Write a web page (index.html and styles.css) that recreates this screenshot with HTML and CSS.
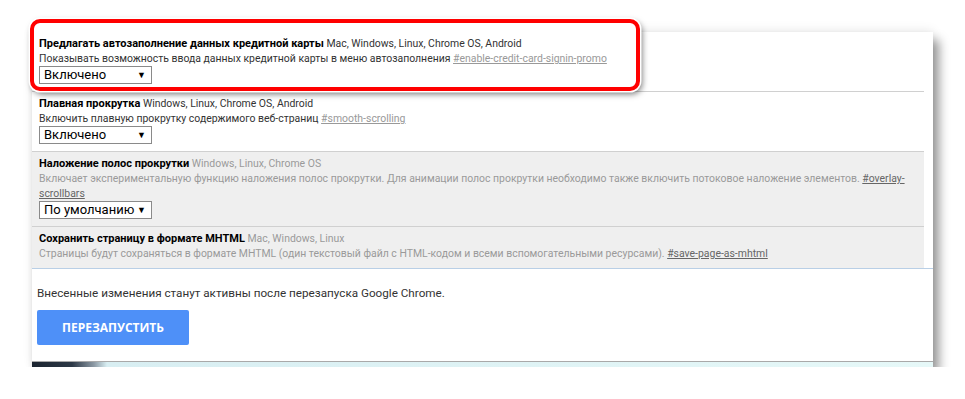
FILE: index.html
```html
<!DOCTYPE html>
<html lang="ru">
<head>
<meta charset="utf-8">
<title>Flags</title>
<link rel="stylesheet" href="styles.css">
</head>
<body>
<div class="stage">
  <div class="panel">
    <div class="list">
      <div class="row hl">
        <div class="title"><b>Предлагать автозаполнение данных кредитной карты</b> <span class="plat">Mac, Windows, Linux, Chrome OS, Android</span></div>
        <div class="desc">Показывать возможность ввода данных кредитной карты в меню автозаполнения <a class="ref">#enable-credit-card-signin-promo</a></div>
        <div class="sel"><span>Включено</span><span class="arr">▼</span></div>
      </div>
      <div class="row">
        <div class="title"><b>Плавная прокрутка</b> <span class="plat">Windows, Linux, Chrome OS, Android</span></div>
        <div class="desc">Включить плавную прокрутку содержимого веб-страниц <a class="ref">#smooth-scrolling</a></div>
        <div class="sel"><span>Включено</span><span class="arr">▼</span></div>
      </div>
      <div class="row off">
        <div class="title"><b>Наложение полос прокрутки</b> <span class="plat">Windows, Linux, Chrome OS</span></div>
        <div class="desc">Включает экспериментальную функцию наложения полос прокрутки. Для анимации полос прокрутки необходимо также включить потоковое наложение элементов. <a class="ref">#overlay-<br>scrollbars</a></div>
        <div class="sel"><span>По умолчанию</span><span class="arr">▼</span></div>
      </div>
      <div class="row off">
        <div class="title"><b>Сохранить страницу в формате MHTML</b> <span class="plat">Mac, Windows, Linux</span></div>
        <div class="desc">Страницы будут сохраняться в формате MHTML (один текстовый файл с HTML-кодом и всеми вспомогательными ресурсами). <a class="ref">#save-page-as-mhtml</a></div>
      </div>
    </div>
    <div class="footer">
      <div class="note">Внесенные изменения станут активны после перезапуска Google Chrome.</div>
      <button class="restart">ПЕРЕЗАПУСТИТЬ</button>
    </div>
    <div class="strip"></div>
  </div>
</div>
</body>
</html>
```
FILE: styles.css
```css
html, body {
  margin: 0;
  background: #ffffff;
}
body {
  font-family: Roboto, "Open Sans", sans-serif;
  color: #333;
}
.stage {
  padding: 32px 0 0 32px;
}
.panel {
  width: 901px;
  height: 335px;
  background: #fff;
  display: flex;
  flex-direction: column;
  position: relative;
  box-shadow: 6px 8px 10px rgba(0,0,0,0.4), 0 -2px 10px rgba(0,0,0,0.08);
}
.list {
  flex: none;
  height: 236px;
  margin-right: 9px;
}
.row {
  padding: 4px 0 7px 7px;
  border-bottom: 1px solid #d0d0d0;
  font-size: 10.45px;
  line-height: 15px;
  color: #333;
}
.row.off {
  background: #efefef;
  color: #9a9a9a;
}
.title b {
  color: #000;
  font-weight: 700;
  font-size: 11px;
}
.ref {
  color: #999;
  text-decoration: underline;
}
.off .ref {
  color: #666;
}
.desc {
  white-space: nowrap;
}
.sel {
  box-sizing: border-box;
  width: 113px;
  height: 18px;
  border: 1px solid #8a8a8a;
  background: #fff;
  color: #000;
  font-size: 13px;
  line-height: 16px;
  padding: 0 5px 0 4px;
  display: flex;
  justify-content: space-between;
  align-items: center;
  white-space: nowrap;
}
.sel .arr {
  font-size: 9px;
  line-height: 16px;
}
.hl {
  position: relative;
  z-index: 0;
}
.hl::before {
  content: "";
  position: absolute;
  z-index: -1;
  left: -2px;
  top: -13px;
  width: 610px;
  height: 72px;
  box-sizing: border-box;
  background: #fff;
  border: 4px solid #f00;
  border-radius: 10px;
  box-shadow: 0 0 0 1.5px #fff, 2px 3px 6px rgba(0,0,0,0.55);
}
.footer {
  position: relative;
  z-index: 1;
  flex: none;
  height: 94px;
  box-sizing: border-box;
  background: #fff;
  border-top: 1px solid #b9cfe6;
  border-bottom: 1px solid #a9a9a9;
  padding: 15px 0 0 5px;
}
.note {
  font-size: 11.7px;
  line-height: 18px;
  color: #333;
  margin-bottom: 8px;
}
.restart {
  display: block;
  width: 152px;
  height: 35px;
  border: 0;
  border-radius: 2px;
  background: #4e90f8;
  color: #fff;
  font-family: "Open Sans", Roboto, sans-serif;
  font-weight: 700;
  font-size: 12px;
  padding: 0;
}
.strip {
  flex: none;
  height: 5px;
  background: linear-gradient(to right, #1b2430 0px, #2c3846 40px, #8c99a4 62px, #d8eef2 75px, #e6f8f8 100%);
}
```
